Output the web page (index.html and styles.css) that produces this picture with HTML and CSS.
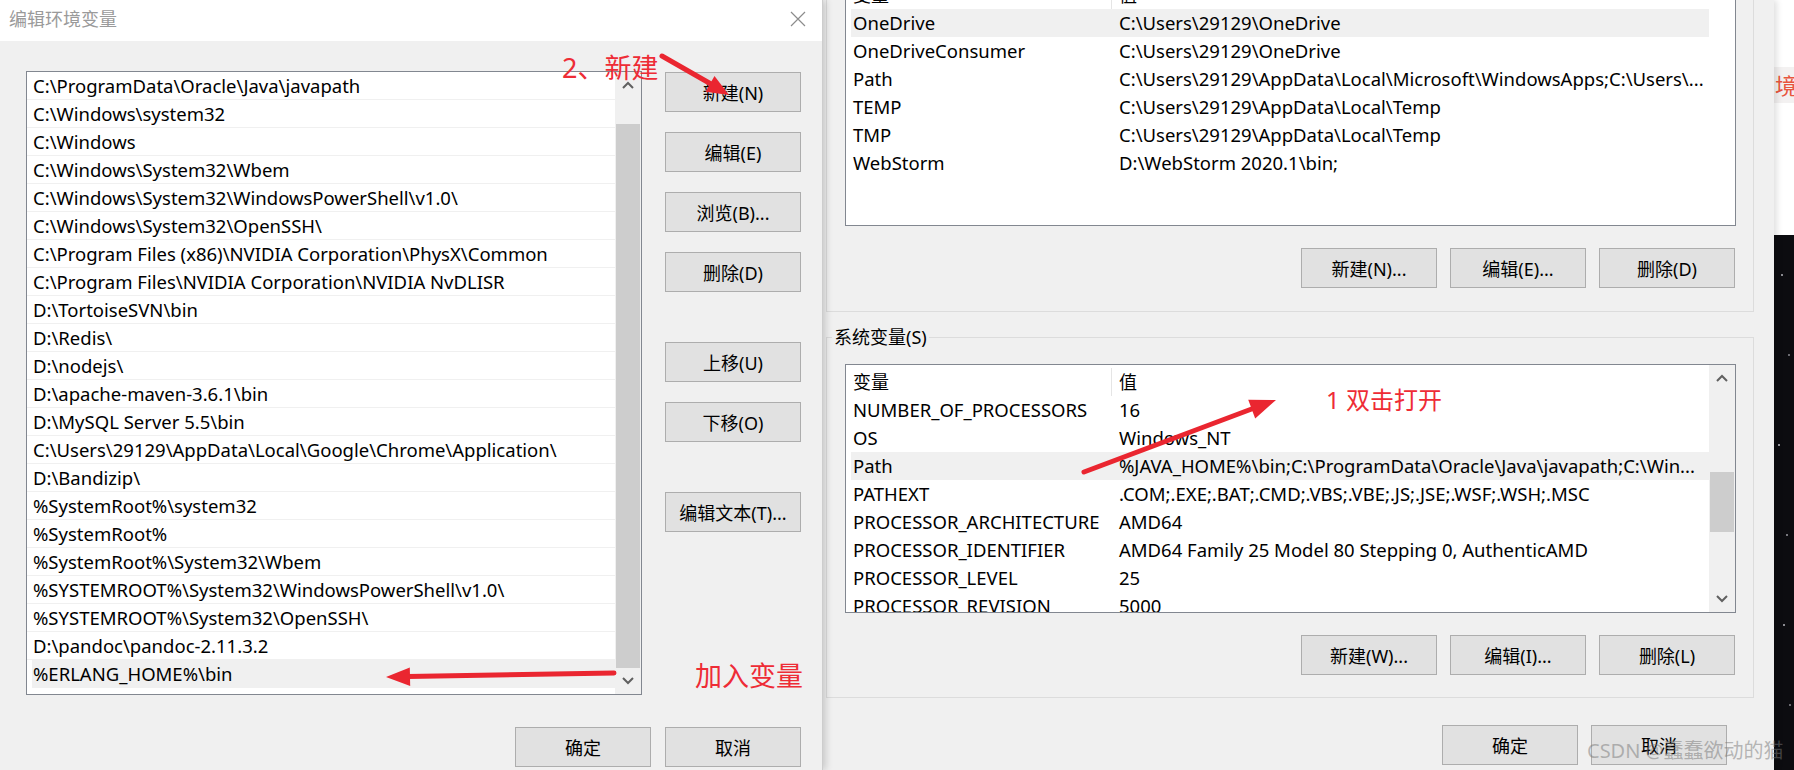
FILE: index.html
```html
<!DOCTYPE html>
<html lang="zh-CN">
<head>
<meta charset="utf-8">
<title>编辑环境变量</title>
<link rel="stylesheet" href="styles.css">
</head>
<body>
<div class="screen">
  <section class="dlg-left">
    <header class="titlebar">
      <span class="title">编辑环境变量</span>
      <svg class="close" width="16" height="16" viewBox="0 0 16 16"><path d="M1 1L15 15M15 1L1 15"/></svg>
    </header>
    <div class="left-body">
      <div class="main-row">
        <div class="listbox path-list">
          <ul class="rows">
            <li>C:\ProgramData\Oracle\Java\javapath</li>
            <li>C:\Windows\system32</li>
            <li>C:\Windows</li>
            <li>C:\Windows\System32\Wbem</li>
            <li>C:\Windows\System32\WindowsPowerShell\v1.0\</li>
            <li>C:\Windows\System32\OpenSSH\</li>
            <li>C:\Program Files (x86)\NVIDIA Corporation\PhysX\Common</li>
            <li>C:\Program Files\NVIDIA Corporation\NVIDIA NvDLISR</li>
            <li>D:\TortoiseSVN\bin</li>
            <li>D:\Redis\</li>
            <li>D:\nodejs\</li>
            <li>D:\apache-maven-3.6.1\bin</li>
            <li>D:\MySQL Server 5.5\bin</li>
            <li>C:\Users\29129\AppData\Local\Google\Chrome\Application\</li>
            <li>D:\Bandizip\</li>
            <li>%SystemRoot%\system32</li>
            <li>%SystemRoot%</li>
            <li>%SystemRoot%\System32\Wbem</li>
            <li>%SYSTEMROOT%\System32\WindowsPowerShell\v1.0\</li>
            <li>%SYSTEMROOT%\System32\OpenSSH\</li>
            <li>D:\pandoc\pandoc-2.11.3.2</li>
            <li class="sel">%ERLANG_HOME%\bin</li>
          </ul>
          <div class="vscroll">
            <span class="arrow"><svg width="12" height="8" viewBox="0 0 12 8"><path d="M1 7L6 2L11 7"/></svg></span>
            <span class="track track-left"><span class="thumb"></span></span>
            <span class="arrow"><svg width="12" height="8" viewBox="0 0 12 8"><path d="M1 1L6 6L11 1"/></svg></span>
          </div>
        </div>
        <div class="side-buttons">
          <button class="btn">新建(N)</button>
          <button class="btn gap-s">编辑(E)</button>
          <button class="btn gap-s">浏览(B)...</button>
          <button class="btn gap-s">删除(D)</button>
          <button class="btn gap-l">上移(U)</button>
          <button class="btn gap-s">下移(O)</button>
          <button class="btn gap-l">编辑文本(T)...</button>
        </div>
      </div>
      <div class="footer footer-left">
        <button class="btn">确定</button>
        <button class="btn">取消</button>
      </div>
    </div>
  </section>

  <section class="dlg-right">
    <div class="group group-user">
      <div class="listbox var-list user-list">
        <div class="var-rows">
          <div class="vrow vhead"><span class="vname">变量</span><span class="vval">值</span></div>
          <div class="vrow sel"><span class="vname">OneDrive</span><span class="vval">C:\Users\29129\OneDrive</span></div>
          <div class="vrow"><span class="vname">OneDriveConsumer</span><span class="vval">C:\Users\29129\OneDrive</span></div>
          <div class="vrow"><span class="vname">Path</span><span class="vval">C:\Users\29129\AppData\Local\Microsoft\WindowsApps;C:\Users\...</span></div>
          <div class="vrow"><span class="vname">TEMP</span><span class="vval">C:\Users\29129\AppData\Local\Temp</span></div>
          <div class="vrow"><span class="vname">TMP</span><span class="vval">C:\Users\29129\AppData\Local\Temp</span></div>
          <div class="vrow"><span class="vname">WebStorm</span><span class="vval">D:\WebStorm 2020.1\bin;</span></div>
        </div>
        <div class="noscroll"></div>
      </div>
      <div class="btn-row">
        <button class="btn">新建(N)...</button>
        <button class="btn">编辑(E)...</button>
        <button class="btn">删除(D)</button>
      </div>
    </div>

    <fieldset class="group group-sys">
      <legend>系统变量(S)</legend>
      <div class="listbox var-list sys-list">
        <div class="var-rows">
          <div class="vrow vhead"><span class="vname">变量</span><span class="vval">值</span></div>
          <div class="vrow"><span class="vname">NUMBER_OF_PROCESSORS</span><span class="vval">16</span></div>
          <div class="vrow"><span class="vname">OS</span><span class="vval">Windows_NT</span></div>
          <div class="vrow sel"><span class="vname">Path</span><span class="vval">%JAVA_HOME%\bin;C:\ProgramData\Oracle\Java\javapath;C:\Win...</span></div>
          <div class="vrow"><span class="vname">PATHEXT</span><span class="vval">.COM;.EXE;.BAT;.CMD;.VBS;.VBE;.JS;.JSE;.WSF;.WSH;.MSC</span></div>
          <div class="vrow"><span class="vname">PROCESSOR_ARCHITECTURE</span><span class="vval">AMD64</span></div>
          <div class="vrow"><span class="vname">PROCESSOR_IDENTIFIER</span><span class="vval">AMD64 Family 25 Model 80 Stepping 0, AuthenticAMD</span></div>
          <div class="vrow"><span class="vname">PROCESSOR_LEVEL</span><span class="vval">25</span></div>
          <div class="vrow"><span class="vname">PROCESSOR_REVISION</span><span class="vval">5000</span></div>
        </div>
        <div class="vscroll">
          <span class="arrow"><svg width="12" height="8" viewBox="0 0 12 8"><path d="M1 7L6 2L11 7"/></svg></span>
          <span class="track track-sys"><span class="thumb"></span></span>
          <span class="arrow"><svg width="12" height="8" viewBox="0 0 12 8"><path d="M1 1L6 6L11 1"/></svg></span>
        </div>
      </div>
      <div class="btn-row">
        <button class="btn">新建(W)...</button>
        <button class="btn">编辑(I)...</button>
        <button class="btn">删除(L)</button>
      </div>
    </fieldset>

    <div class="footer footer-right">
      <button class="btn">确定</button>
      <button class="btn">取消</button>
    </div>
  </section>

  <aside class="edge">
    <div class="edge-top"><div class="edge-tag">境变</div></div>
    <div class="edge-bottom"></div>
  </aside>

  <svg class="annot" width="1794" height="770" viewBox="0 0 1794 770">
    <g class="arrow-line">
      <line x1="662" y1="56" x2="711" y2="84"/>
      <line x1="614" y1="673" x2="408" y2="676.6"/>
      <line x1="1084" y1="472" x2="1253" y2="408.5"/>
    </g>
    <g class="arrow-head">
      <polygon points="729,95 705.5,91.7 714.5,76.1"/>
      <polygon points="386,677 410.2,686 409.8,667.4"/>
      <polygon points="1276,400 1255.2,418.5 1248.2,399.7"/>
    </g>
  </svg>
  <span class="note note-new">2、新建</span>
  <span class="note note-add">加入变量</span>
  <span class="note note-open">1 双击打开</span>
  <span class="watermark">CSDN @蠢蠢欲动的猫</span>
</div>
</body>
</html>
```

FILE: styles.css
```css
* { box-sizing: border-box; }
html, body { margin: 0; padding: 0; }
body {
  width: 1794px;
  height: 770px;
  overflow: hidden;
  background: #f0f0f0;
  color: #000;
  font-family: "Noto Sans", "Noto Sans CJK SC", sans-serif;
}
.screen {
  position: relative;
  display: flex;
  width: 1794px;
  height: 770px;
  overflow: hidden;
}

/* ---------- buttons ---------- */
.btn {
  width: 136px;
  height: 40px;
  padding: 0;
  margin: 0;
  background: #e1e1e1;
  border: 1px solid #adadad;
  border-radius: 0;
  font-family: "Noto Sans", "Noto Sans CJK SC", sans-serif;
  font-size: 18px;
  color: #000;
  display: flex;
  align-items: center;
  justify-content: center;
  white-space: nowrap;
}

/* ---------- left dialog ---------- */
.dlg-left {
  width: 823px;
  flex: none;
  display: flex;
  flex-direction: column;
  background: #f0f0f0;
  position: relative;
  z-index: 2;
  border-right: 1px solid #cdcdcd;
  box-shadow: 3px 0 7px rgba(0, 0, 0, 0.16);
}
.titlebar {
  height: 41px;
  flex: none;
  background: #fff;
  display: flex;
  align-items: center;
  justify-content: space-between;
  padding: 0 16px 0 9px;
}
.title {
  font-size: 18px;
  color: #9a9a9a;
  line-height: 24px;
  margin-top: -4px;
}
.close { margin-top: -3px; }
.close path { stroke: #8c8c8c; stroke-width: 1.2; fill: none; }

.left-body {
  flex: 1;
  display: flex;
  flex-direction: column;
  padding: 30px 21px 0 26px;
}
.main-row {
  display: flex;
  gap: 23px;
}
.listbox {
  border: 1px solid #828790;
  background: #fff;
  display: flex;
  overflow: hidden;
}
.path-list {
  width: 616px;
  height: 624px;
}
.rows {
  list-style: none;
  margin: 0;
  padding: 0;
  flex: 1;
  min-width: 0;
}
.rows li {
  height: 28px;
  line-height: 27px;
  border-bottom: 1px solid #f0f0f0;
  padding-left: 6px;
  font-size: 18.5px;
  white-space: nowrap;
  overflow: hidden;
}
.rows li.sel {
  background: #f0f0f0;
  margin-left: 5px;
  padding-left: 1px;
}
.vscroll {
  width: 26px;
  flex: none;
  display: flex;
  flex-direction: column;
  background: #f0f0f0;
}
.arrow {
  height: 26px;
  flex: none;
  display: flex;
  align-items: center;
  justify-content: center;
}
.arrow path { stroke: #606060; stroke-width: 2; fill: none; }
.track {
  flex: 1;
  display: flex;
  flex-direction: column;
  padding: 0 1px;
}
.thumb { background: #cdcdcd; display: block; }
.track-left { padding-top: 26px; }
.track-left .thumb { flex: 1; }
.track-sys { padding-top: 81px; }
.track-sys .thumb { height: 60px; }

.side-buttons {
  display: flex;
  flex-direction: column;
  padding-top: 1px;
}
.gap-s { margin-top: 20px; }
.gap-l { margin-top: 50px; }

.footer {
  display: flex;
  justify-content: flex-end;
  gap: 14px;
}
.footer-left { margin-top: 32px; }

/* ---------- right dialog ---------- */
.dlg-right {
  width: 951px;
  flex: none;
  display: flex;
  flex-direction: column;
  background: #f0f0f0;
  position: relative;
  z-index: 1;
  box-shadow: 3px 0 6px rgba(0, 0, 0, 0.12);
}
.group {
  border: 1px solid #dcdcdc;
  min-width: 0;
}
.group-user {
  margin: -60px 20px 0 3px;
  padding: 36px 18px 23px 18px;
}
.var-list { width: 891px; }
.user-list { height: 249px; }
.sys-list { height: 249px; margin-top: 15px; }
.var-rows {
  flex: 1;
  min-width: 0;
  padding-top: 3px;
}
.noscroll { width: 26px; flex: none; }
.vrow {
  display: flex;
  height: 28px;
  line-height: 28px;
  font-size: 18.5px;
  margin-left: 5px;
  white-space: nowrap;
}
.vrow.sel { background: #f0f0f0; }
.vname {
  width: 261px;
  flex: none;
  padding-left: 2px;
  overflow: hidden;
}
.vval {
  flex: 1;
  min-width: 0;
  padding-left: 7px;
  overflow: hidden;
}
.vhead { font-size: 18px; }
.vhead .vname { border-right: 1px solid #e5e5e5; }
.btn-row {
  display: flex;
  justify-content: flex-end;
  gap: 13px;
  margin-top: 22px;
}
.group-sys {
  margin: 13px 20px 0 3px;
  padding: 0 18px 22px 18px;
}
.group-sys legend {
  font-size: 18px;
  line-height: 24px;
  padding: 0 2px;
  margin-left: -13px;
}
.footer-right {
  margin-top: 27px;
  padding-right: 47px;
  gap: 13px;
}

/* ---------- right edge strip ---------- */
.edge {
  flex: 1;
  display: flex;
  flex-direction: column;
}
.edge-top {
  height: 235px;
  background: #fff;
  padding-top: 67px;
}
.edge-tag {
  height: 36px;
  background: #f3f1f1;
  color: #e8553e;
  font-size: 22px;
  line-height: 36px;
  white-space: nowrap;
  overflow: hidden;
  padding-left: 1px;
}
.edge-bottom {
  flex: 1;
  background-color: #0c0c10;
  background-image:
    radial-gradient(circle at 8px 40px, #8a8a90 0.8px, transparent 1.4px),
    radial-gradient(circle at 15px 120px, #6a6a70 0.8px, transparent 1.4px),
    radial-gradient(circle at 5px 210px, #9a9aa0 0.8px, transparent 1.4px),
    radial-gradient(circle at 13px 300px, #77777d 0.8px, transparent 1.4px),
    radial-gradient(circle at 10px 390px, #8a8a90 0.8px, transparent 1.4px),
    radial-gradient(circle at 16px 470px, #6a6a70 0.8px, transparent 1.4px);
}

/* ---------- annotations ---------- */
.annot {
  position: absolute;
  left: 0;
  top: 0;
  z-index: 5;
  pointer-events: none;
}
.arrow-line line {
  stroke: #ea2630;
  stroke-width: 5;
  stroke-linecap: round;
}
.arrow-head polygon { fill: #ea2630; }
.note {
  position: absolute;
  z-index: 6;
  color: #ee2c36;
  white-space: nowrap;
  font-family: "Noto Sans", "Noto Sans CJK SC", sans-serif;
}
.note-new { left: 562px; top: 50px; font-size: 27px; line-height: 36px; }
.note-add { left: 695px; top: 658px; font-size: 27px; line-height: 36px; }
.note-open { left: 1326px; top: 384px; font-size: 24px; line-height: 32px; }
.watermark {
  position: absolute;
  z-index: 6;
  left: 1587px;
  top: 738px;
  font-size: 20px;
  line-height: 26px;
  color: rgba(120, 120, 120, 0.5);
  white-space: nowrap;
}
```
